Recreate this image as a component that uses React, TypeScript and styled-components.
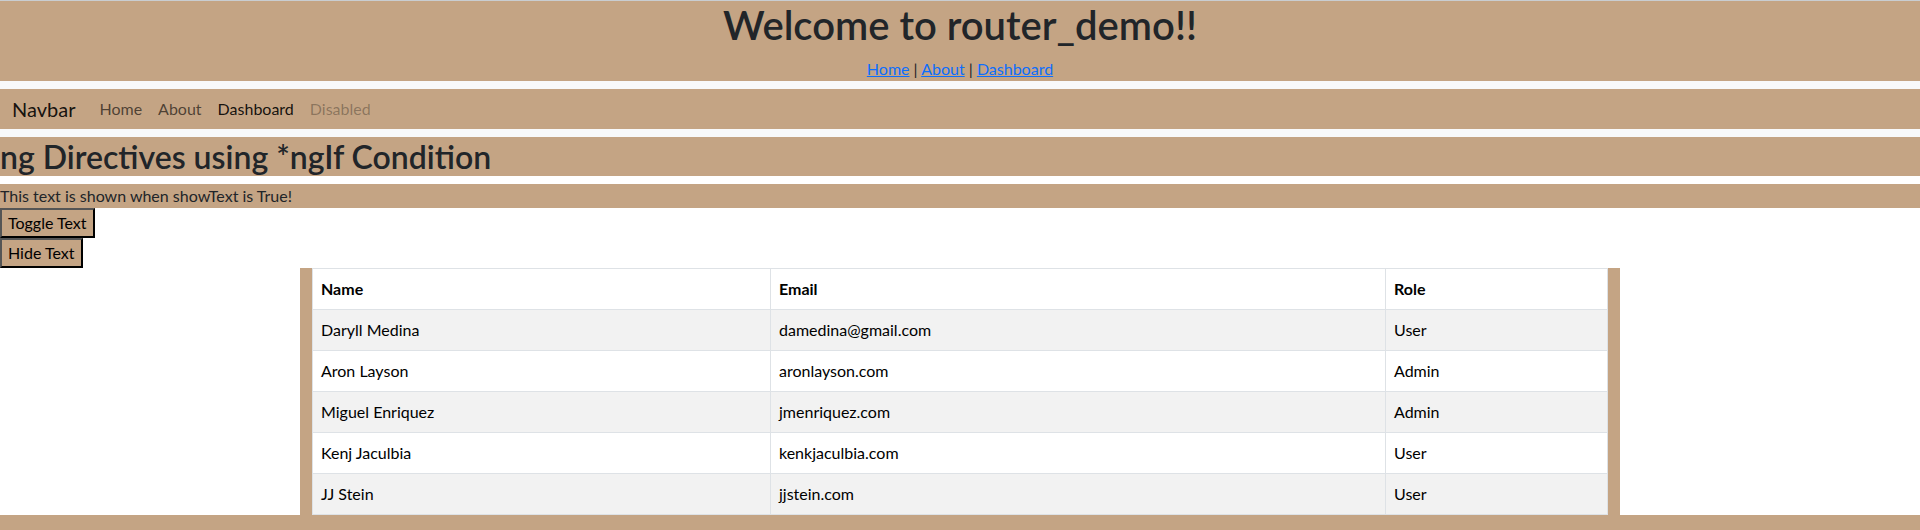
import React from 'react';
import styled, { createGlobalStyle } from 'styled-components';

const TAN = '#c4a484';

const GlobalStyle = createGlobalStyle`
  html, body {
    margin: 0;
    padding: 0;
    background: #fff;
  }

  body {
    font-family: Lato, "Noto Sans", "Liberation Sans", sans-serif;
    font-size: 16px;
    line-height: 1.5;
    color: #212529;
  }

  * {
    box-sizing: border-box;
  }
`;

const TopArea = styled.div`
  background: #f8f9fa;
  display: flex;
  flex-direction: column;
  row-gap: 8px;
  padding-bottom: 8px;
`;

const Header = styled.header`
  background: ${TAN};
  border-top: 1px solid #c9cdd1;
  text-align: center;

  > h1 {
    margin: 0 0 8px;
    font-size: 40px;
    font-weight: 600;
    line-height: 48px;
    color: #212529;
  }
`;

const RouteLinks = styled.div`
  line-height: 24px;

  > a {
    color: #0d6efd;
    text-decoration: underline;
  }
`;

const Navbar = styled.nav`
  background: ${TAN};
  height: 40px;
  display: flex;
  align-items: center;
  padding: 0 12px;
`;

const Brand = styled.span`
  font-size: 20px;
  line-height: 30px;
  color: rgba(0, 0, 0, 0.9);
  margin-right: 16px;
`;

const NavLink = styled.a<{ $state?: 'active' | 'disabled' }>`
  padding: 8px;
  line-height: 24px;
  text-decoration: none;
  color: ${({ $state }) =>
    $state === 'active' ? 'rgba(0, 0, 0, 0.9)' : $state === 'disabled' ? 'rgba(0, 0, 0, 0.3)' : 'rgba(0, 0, 0, 0.62)'};
`;

const Title = styled.h2`
  margin: 0 0 8px;
  background: ${TAN};
  font-size: 32px;
  font-weight: 600;
  line-height: 39px;
  color: #212529;
  white-space: nowrap;
`;

const Message = styled.p`
  margin: 0;
  background: ${TAN};
  line-height: 24px;
`;

const Button = styled.button`
  display: block;
  font-family: inherit;
  font-size: 16px;
  line-height: 24px;
  padding: 1px 6px;
  color: #000;
  background: ${TAN};
  border: 2px solid;
  border-color: #555 #000 #000 #555;
  border-radius: 0;
`;

const TableSection = styled.div`
  width: 1320px;
  margin: 0 auto;
  padding: 0 12px;
  background: ${TAN};
`;

const Table = styled.table`
  width: 100%;
  border-collapse: collapse;
  table-layout: fixed;
  color: #000;
  background: #fff;

  th, td {
    border: 1px solid #dee2e6;
    padding: 8px;
    line-height: 24px;
    text-align: left;
  }

  th {
    font-weight: 700;
  }

  tbody tr:nth-child(odd) td {
    background: #f2f2f2;
  }
`;

const Footer = styled.div`
  background: ${TAN};
  height: 40px;
`;

const users = [
  { name: 'Daryll Medina', email: 'damedina@gmail.com', role: 'User' },
  { name: 'Aron Layson', email: 'aronlayson.com', role: 'Admin' },
  { name: 'Miguel Enriquez', email: 'jmenriquez.com', role: 'Admin' },
  { name: 'Kenj Jaculbia', email: 'kenkjaculbia.com', role: 'User' },
  { name: 'JJ Stein', email: 'jjstein.com', role: 'User' },
];

export default function App() {
  return (
    <>
      <GlobalStyle />
      <TopArea>
        <Header>
          <h1>Welcome to router_demo!!</h1>
          <RouteLinks>
            <a href="#">Home</a> | <a href="#">About</a> | <a href="#">Dashboard</a>
          </RouteLinks>
        </Header>
        <Navbar>
          <Brand>Navbar</Brand>
          <NavLink href="#">Home</NavLink>
          <NavLink href="#">About</NavLink>
          <NavLink href="#" $state="active">Dashboard</NavLink>
          <NavLink $state="disabled">Disabled</NavLink>
        </Navbar>
      </TopArea>
      <Title>ng Directives using *ngIf Condition</Title>
      <Message>This text is shown when showText is True!</Message>
      <Button>Toggle Text</Button>
      <Button>Hide Text</Button>
      <TableSection>
        <Table>
          <colgroup>
            <col style={{ width: 458 }} />
            <col style={{ width: 615 }} />
            <col />
          </colgroup>
          <thead>
            <tr>
              <th>Name</th>
              <th>Email</th>
              <th>Role</th>
            </tr>
          </thead>
          <tbody>
            {users.map((u) => (
              <tr key={u.name}>
                <td>{u.name}</td>
                <td>{u.email}</td>
                <td>{u.role}</td>
              </tr>
            ))}
          </tbody>
        </Table>
      </TableSection>
      <Footer />
    </>
  );
}
